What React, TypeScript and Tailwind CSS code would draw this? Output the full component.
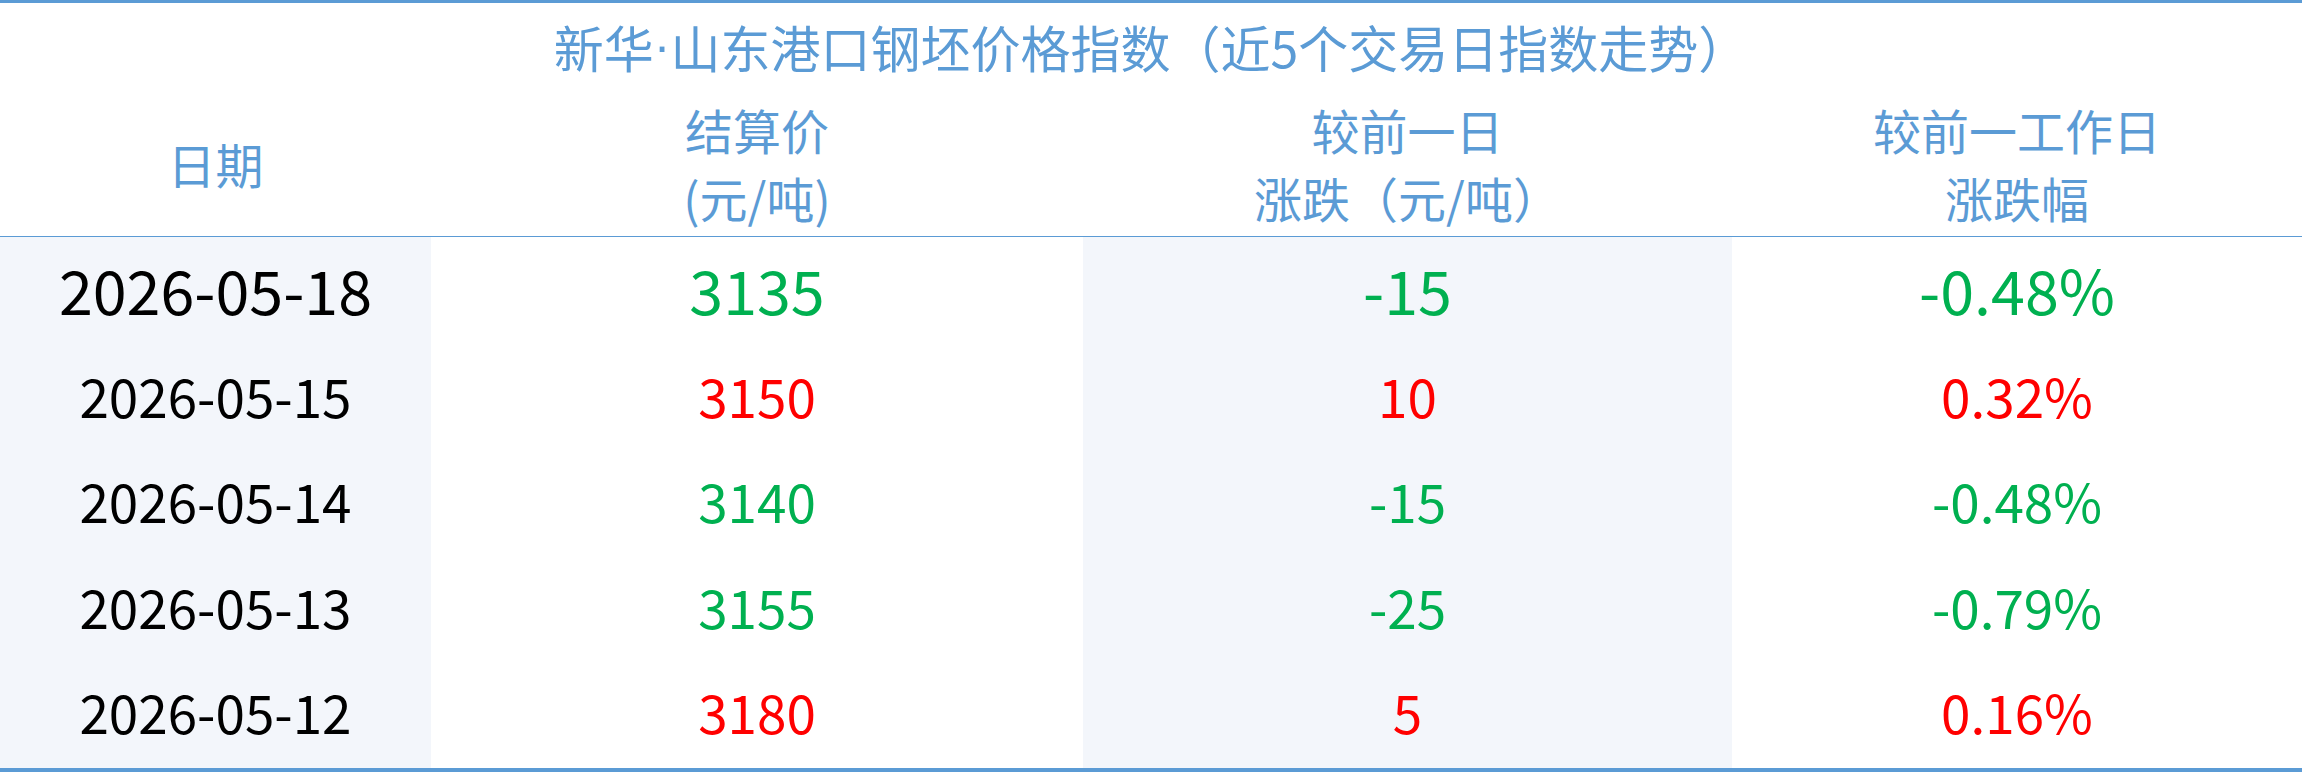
const rows = [
  { date: "2026-05-18", price: "3135", diff: "-15", pct: "-0.48%", up: false },
  { date: "2026-05-15", price: "3150", diff: "10", pct: "0.32%", up: true },
  { date: "2026-05-14", price: "3140", diff: "-15", pct: "-0.48%", up: false },
  { date: "2026-05-13", price: "3155", diff: "-25", pct: "-0.79%", up: false },
  { date: "2026-05-12", price: "3180", diff: "5", pct: "0.16%", up: true },
];

const App = () => {
  return (
    <div
      className="w-[2302px] h-[772px] bg-white border-t-[3px] border-b-[4px] border-[#5b9bd5] flex flex-col"
      style={{ fontFamily: '"Noto Sans CJK SC", "Noto Sans", sans-serif' }}
    >
      <div className="h-[91px] flex items-center justify-center pb-[6px] text-[50px] leading-none text-[#5b9bd5]">
        新华<span className="font-['Liberation_Sans']">·</span>山东港口钢坯价格指数（近5个交易日指数走势）
      </div>

      <div className="h-[143px] grid grid-cols-[431px_652px_649px_1fr] border-b border-[#5b9bd5] pb-[5px] text-[48px] leading-[68px] text-[#5b9bd5]">
        <div className="flex items-center justify-center">日期</div>
        <div className="flex flex-col items-center justify-center">
          <span>结算价</span>
          <span>(元/吨)</span>
        </div>
        <div className="flex flex-col items-center justify-center">
          <span>较前一日</span>
          <span>涨跌（元/吨）</span>
        </div>
        <div className="flex flex-col items-center justify-center">
          <span>较前一工作日</span>
          <span>涨跌幅</span>
        </div>
      </div>

      <div className="flex-1 flex flex-col">
        {rows.map((r, i) => {
          const color = r.up ? "text-[#ff0000]" : "text-[#00b050]";
          const size = i === 0 ? "text-[61px]" : "text-[53px]";
          return (
            <div
              key={r.date}
              className={`grid grid-cols-[431px_652px_649px_1fr] leading-none ${size} ${
                i === 0 ? "h-[110px]" : "flex-1"
              }`}
            >
              <div className="bg-[#f3f6fb] flex items-center justify-center pb-[8px] text-black">
                {r.date}
              </div>
              <div className={`flex items-center justify-center pb-[8px] ${color}`}>{r.price}</div>
              <div className={`bg-[#f3f6fb] flex items-center justify-center pb-[8px] ${color}`}>
                {r.diff}
              </div>
              <div className={`flex items-center justify-center pb-[8px] ${color}`}>{r.pct}</div>
            </div>
          );
        })}
      </div>
    </div>
  );
};

export default App;
